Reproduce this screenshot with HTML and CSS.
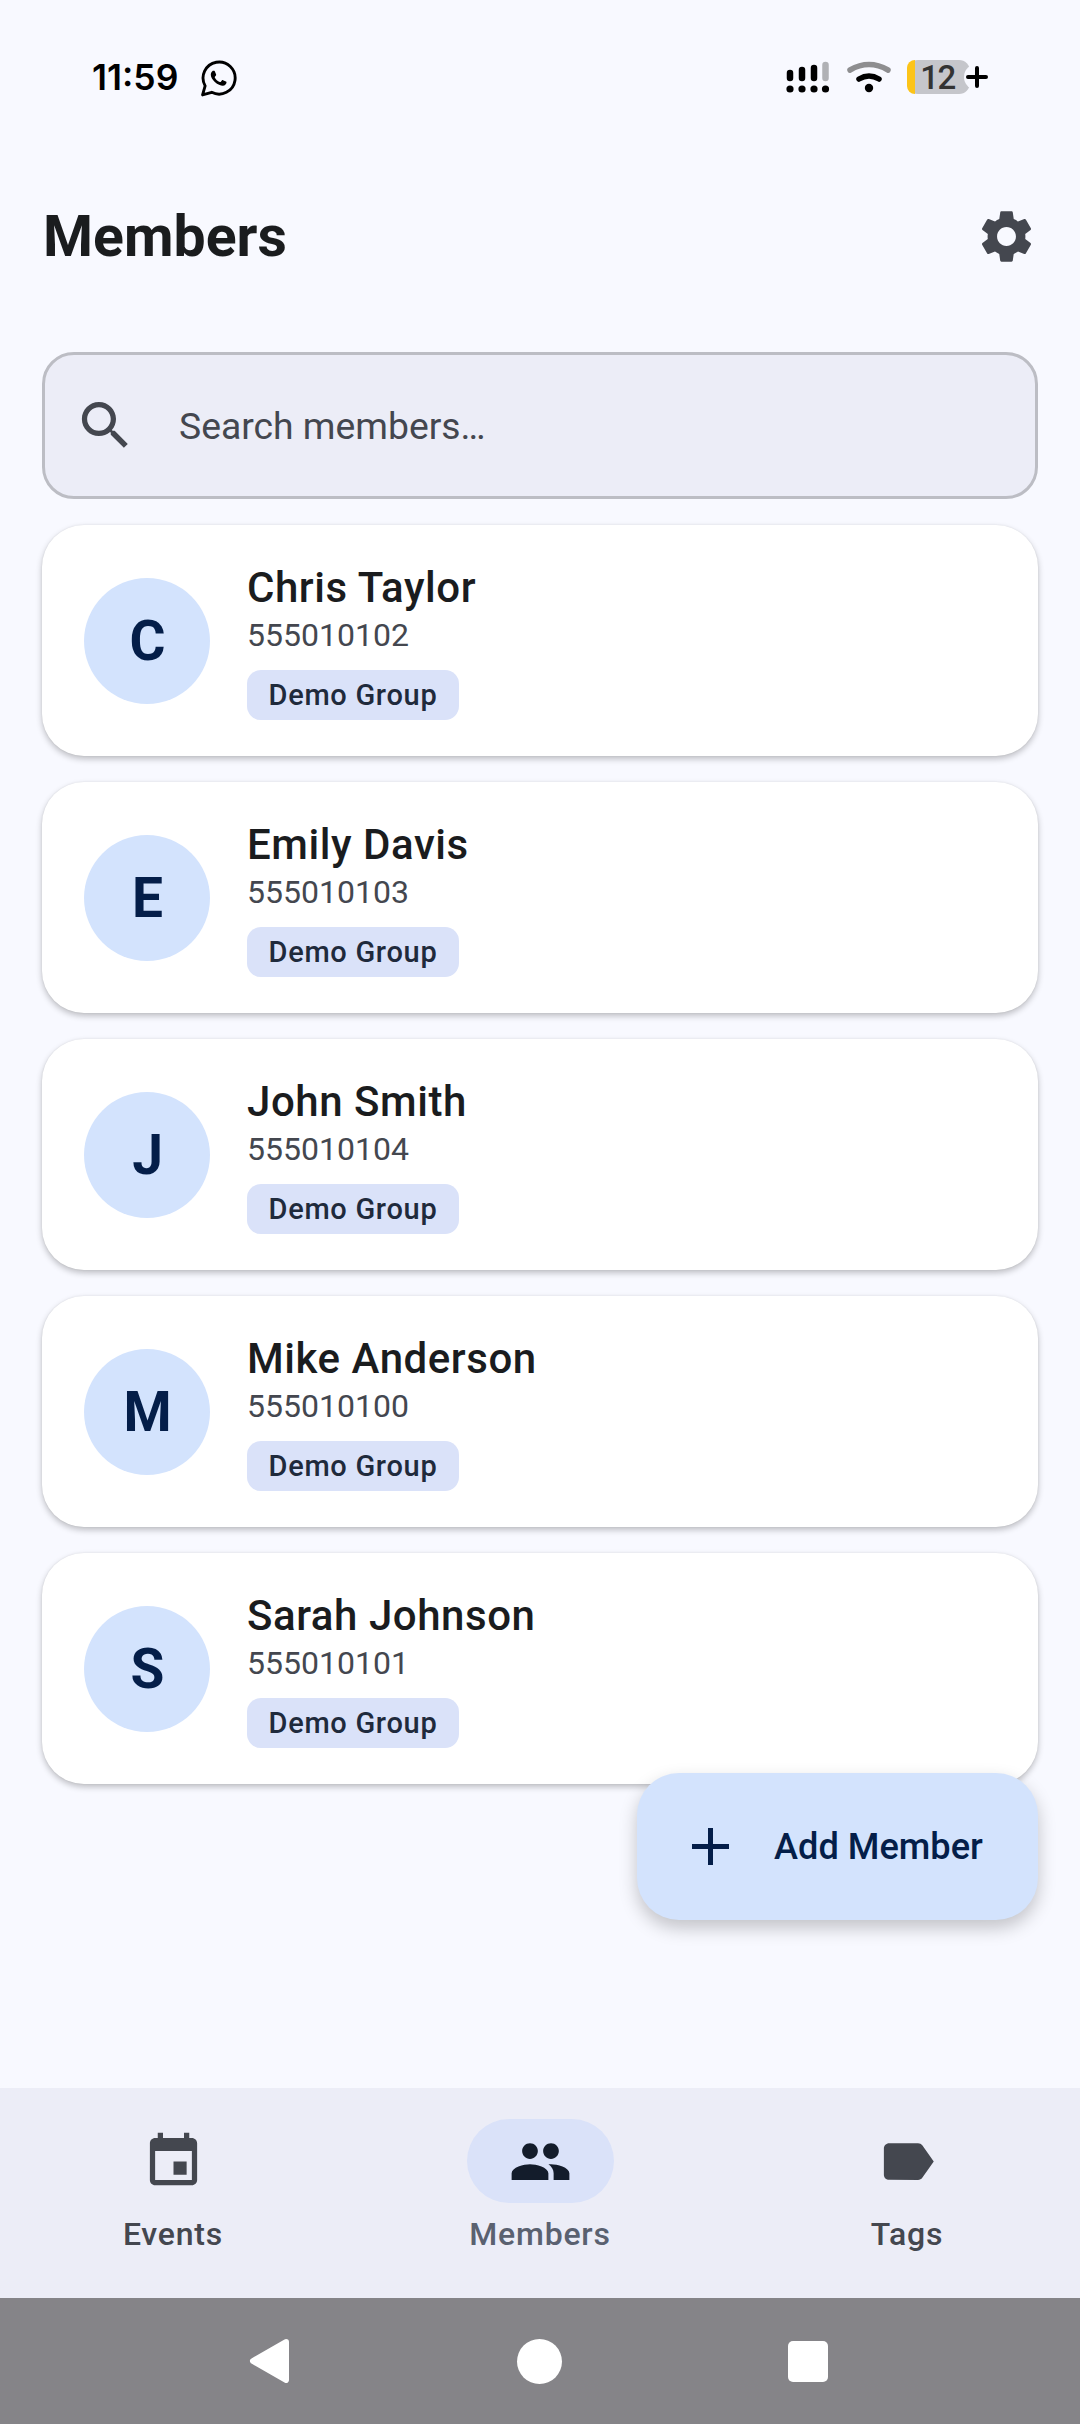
FILE: index.html
```html
<!DOCTYPE html>
<html>

<head>
    <meta charset="utf-8">
    <title>Members</title>
    <link rel="stylesheet" href="styles.css">
</head>

<body>
    <div class="statusbar">
        <div class="status-left">
            <span class="clock">11:59</span>
            <svg class="whatsapp" viewBox="0 0 36 36">
                <path d="M2.5 34 L5 25.2 A15.6 15.6 0 1 1 11.4 31.4 Z" fill="none" stroke="#000" stroke-width="2.8" stroke-linejoin="round" />
                <path d="M13.2 10.5c.5 0 1 0 1.3.8l1.2 2.8c.1.4 0 .7-.2 1l-1 1.3c-.2.3-.2.5 0 .8.9 1.6 2.5 3.2 4.8 4.2.3.1.6.1.8-.1l1.3-1.5c.3-.3.6-.3 1-.2l2.8 1.3c.4.2.6.4.6.7 0 1.6-1.4 3.3-3.6 3.4-1.5.1-5-1-7.8-3.6-2.6-2.4-3.8-5-3.9-7 0-1.8.9-3 1.5-3.5.3-.3.6-.4.9-.4z" />
            </svg>
        </div>
        <div class="status-right">
            <svg class="signal" viewBox="0 0 44 34">
                <g stroke="#000" stroke-width="6.5" stroke-linecap="round">
                    <path d="M4 13V18" />
                    <path d="M16 10V18" />
                    <path d="M28 8V18" />
                    <path d="M39.5 5V18" stroke="#b0b1b5" />
                </g>
                <circle cx="4" cy="29" r="3.6" />
                <circle cx="16" cy="29" r="3.6" />
                <circle cx="28" cy="29" r="3.6" />
                <circle cx="39.5" cy="29" r="3.6" />
            </svg>
            <svg class="wifi" viewBox="0 0 44 34">
                <path d="M3 10Q22 -1 41 10" fill="none" stroke="#8e8e90" stroke-width="5.5" stroke-linecap="round" />
                <path d="M12 19Q22 13 32 19" fill="none" stroke="#000" stroke-width="5.5" stroke-linecap="round" />
                <circle cx="22" cy="28" r="4.2" />
            </svg>
            <div class="battery">
                <span class="battery-level"></span>
                <span class="battery-num">12</span>
                <svg class="battery-plus" viewBox="0 0 26 26">
                    <circle cx="13" cy="13" r="13" fill="#f8f9ff" />
                    <path d="M13 4V22M4 13H22" stroke="#000" stroke-width="4" stroke-linecap="round" />
                </svg>
            </div>
        </div>
    </div>

    <header class="topbar">
        <h1>Members</h1>
        <svg class="icon gear" viewBox="0 0 24 24">
            <path d="M19.14 12.94c.04-.3.06-.61.06-.94 0-.32-.02-.64-.07-.94l2.03-1.58c.18-.14.23-.41.12-.61l-1.92-3.32c-.12-.22-.37-.29-.59-.22l-2.39.96c-.5-.38-1.03-.7-1.62-.94l-.36-2.54c-.04-.24-.24-.41-.48-.41h-3.84c-.24 0-.43.17-.47.41l-.36 2.54c-.59.24-1.13.57-1.62.94l-2.39-.96c-.22-.08-.47 0-.59.22L2.74 8.87c-.12.21-.08.47.12.61l2.03 1.58c-.05.3-.09.63-.09.94s.02.64.07.94l-2.03 1.58c-.18.14-.23.41-.12.61l1.92 3.32c.12.22.37.29.59.22l2.39-.96c.5.38 1.03.7 1.62.94l.36 2.54c.05.24.24.41.48.41h3.84c.24 0 .44-.17.47-.41l.36-2.54c.59-.24 1.13-.56 1.62-.94l2.39.96c.22.08.47 0 .59-.22l1.92-3.32c.12-.22.07-.47-.12-.61l-2.01-1.58zM12 15.6c-1.98 0-3.6-1.62-3.6-3.6s1.62-3.6 3.6-3.6 3.6 1.62 3.6 3.6-1.62 3.6-3.6 3.6z" />
        </svg>
    </header>

    <div class="search">
        <svg class="icon" viewBox="0 0 24 24">
            <path d="M15.5 14h-.79l-.28-.27C15.41 12.59 16 11.11 16 9.5 16 5.91 13.09 3 9.5 3S3 5.91 3 9.5 5.91 16 9.5 16c1.61 0 3.09-.59 4.23-1.57l.27.28v.79l5 4.99L20.49 19l-4.99-5zm-6 0C7.01 14 5 11.99 5 9.5S7.01 5 9.5 5 14 7.01 14 9.5 11.99 14 9.5 14z" />
        </svg>
        <span class="search-text">Search members…</span>
    </div>

    <main class="members">
        <div class="card">
            <div class="avatar">C</div>
            <div class="info">
                <div class="name">Chris Taylor</div>
                <div class="phone">555010102</div>
                <span class="chip">Demo Group</span>
            </div>
        </div>
        <div class="card">
            <div class="avatar">E</div>
            <div class="info">
                <div class="name">Emily Davis</div>
                <div class="phone">555010103</div>
                <span class="chip">Demo Group</span>
            </div>
        </div>
        <div class="card">
            <div class="avatar">J</div>
            <div class="info">
                <div class="name">John Smith</div>
                <div class="phone">555010104</div>
                <span class="chip">Demo Group</span>
            </div>
        </div>
        <div class="card">
            <div class="avatar">M</div>
            <div class="info">
                <div class="name">Mike Anderson</div>
                <div class="phone">555010100</div>
                <span class="chip">Demo Group</span>
            </div>
        </div>
        <div class="card">
            <div class="avatar">S</div>
            <div class="info">
                <div class="name">Sarah Johnson</div>
                <div class="phone">555010101</div>
                <span class="chip">Demo Group</span>
            </div>
        </div>

        <div class="fab">
            <svg class="fab-plus" viewBox="0 0 37 37">
                <path d="M18.5 0V37M0 18.5H37" stroke="#041e49" stroke-width="5" />
            </svg>
            <span>Add Member</span>
        </div>
    </main>

    <nav class="tabs">
        <div class="tab">
            <div class="tab-icon">
                <svg class="icon" viewBox="0 0 24 24">
                    <path d="M17 12h-5v5h5v-5zM16 1v2H8V1H6v2H5c-1.11 0-1.99.9-1.99 2L3 19c0 1.1.89 2 2 2h14c1.1 0 2-.9 2-2V5c0-1.1-.9-2-2-2h-1V1h-2zm3 18H5V8h14v11z" />
                </svg>
            </div>
            <span class="tab-label">Events</span>
        </div>
        <div class="tab active">
            <div class="tab-icon">
                <svg class="icon" viewBox="0 0 24 24">
                    <path d="M16 11c1.66 0 2.99-1.34 2.99-3S17.66 5 16 5c-1.66 0-3 1.34-3 3s1.34 3 3 3zm-8 0c1.66 0 2.99-1.34 2.99-3S9.66 5 8 5C6.34 5 5 6.34 5 8s1.34 3 3 3zm0 2c-2.33 0-7 1.17-7 3.5V19h14v-2.5c0-2.33-4.67-3.5-7-3.5zm8 0c-.29 0-.62.02-.97.05 1.16.84 1.97 1.97 1.97 3.45V19h6v-2.5c0-2.33-4.67-3.5-7-3.5z" />
                </svg>
            </div>
            <span class="tab-label">Members</span>
        </div>
        <div class="tab">
            <div class="tab-icon">
                <svg class="icon" viewBox="0 0 24 24">
                    <path d="M17.63 5.84C17.27 5.33 16.67 5 16 5L5 5.01C3.9 5.01 3 5.9 3 7v10c0 1.1.9 1.99 2 1.99L16 19c.67 0 1.27-.33 1.63-.84L22 12l-4.37-6.16z" />
                </svg>
            </div>
            <span class="tab-label">Tags</span>
        </div>
    </nav>

    <div class="sysnav">
        <svg class="sys-back" viewBox="0 0 41 44">
            <path d="M37 3 L4 22 L37 41 Z" fill="#fff" stroke="#fff" stroke-width="6" stroke-linejoin="round" />
        </svg>
        <span class="sys-home"></span>
        <span class="sys-recent"></span>
    </div>
</body>

</html>
```

FILE: styles.css
```css
* {
    box-sizing: border-box;
}

body {
    margin: 0;
    width: 1080px;
    height: 2424px;
    display: flex;
    flex-direction: column;
    background-color: #f8f9ff;
    font-family: Roboto, sans-serif;
    color: #1a1c1e;
    overflow: hidden;
}

.icon {
    display: block;
    width: 63px;
    height: 63px;
    fill: #44474f;
}

/* status bar */
.statusbar {
    height: 154px;
    padding: 60px 92px 0 92px;
    display: flex;
    justify-content: space-between;
    align-items: flex-start;
}

.status-left {
    display: flex;
    align-items: center;
    height: 36px;
}

.clock {
    margin-top: -2px;
    font-family: Inter, sans-serif;
    font-size: 35.5px;
    font-weight: 600;
    color: #000;
}

.whatsapp {
    width: 37px;
    height: 37px;
    margin-left: 22px;
}

.status-right {
    display: flex;
    align-items: center;
    height: 34px;
}

.signal {
    width: 44px;
    height: 34px;
    margin-left: -5px;
}

.wifi {
    width: 44px;
    height: 34px;
    margin-left: 17px;
}

.battery {
    position: relative;
    width: 63px;
    height: 34px;
    margin-left: 16px;
    margin-right: 18px;
    border-radius: 11px;
    background-color: #c5c6cb;
    display: flex;
    align-items: center;
    justify-content: center;
}

.battery-level {
    position: absolute;
    left: 0;
    top: 0;
    width: 8px;
    height: 34px;
    background-color: #fcc419;
    border-radius: 11px 0 0 11px;
}

.battery-num {
    font-size: 33px;
    font-weight: 500;
    letter-spacing: -1.5px;
    color: #333;
    padding-right: 2px;
}

.battery-plus {
    position: absolute;
    left: 57px;
    top: 4px;
    width: 26px;
    height: 26px;
}

/* title row */
.topbar {
    height: 164px;
    padding: 0 43px;
    display: flex;
    justify-content: space-between;
    align-items: center;
}

h1 {
    margin: 0;
    font-size: 57.2px;
    font-weight: 700;
}

.gear {
    margin-right: -1px;
}

.search {
    height: 147px;
    margin: 34px 42px 26px 42px;
    padding-left: 29px;
    display: flex;
    align-items: center;
    background-color: #ecedf7;
    border: 3px solid #bcbdc4;
    border-radius: 32px;
}

.search-text {
    margin-left: 42px;
    font-size: 37.3px;
    color: #44474f;
}

/* member list */
.members {
    flex: 1;
    position: relative;
    padding: 0 42px;
    display: flex;
    flex-direction: column;
    gap: 25px;
}

.card {
    height: 231px;
    margin-bottom: 1px;
    padding-left: 42px;
    display: flex;
    align-items: center;
    gap: 37px;
    background-color: #fff;
    border-radius: 42px;
    box-shadow: 0 3px 6px rgba(0, 0, 0, 0.24), 0 0 2px rgba(0, 0, 0, 0.08);
}

.avatar {
    width: 126px;
    height: 126px;
    padding-left: 1px;
    display: flex;
    align-items: center;
    justify-content: center;
    border-radius: 50%;
    background-color: #d3e3fd;
    color: #041e49;
    font-size: 55px;
    font-weight: 700;
}

.info {
    padding-top: 3px;
    display: flex;
    flex-direction: column;
    align-items: flex-start;
}

.name {
    margin-top: -4px;
    font-size: 42px;
    line-height: 54px;
    font-weight: 500;
    letter-spacing: 0.55px;
}

.phone {
    font-size: 32px;
    line-height: 40px;
    color: #44474f;
}

.chip {
    margin-top: 15px;
    width: 212px;
    height: 50px;
    display: flex;
    align-items: center;
    justify-content: center;
    background-color: #dae2f9;
    border-radius: 14px;
    color: #1f2a3c;
    font-size: 29px;
    font-weight: 500;
    letter-spacing: 0.7px;
}

.fab {
    position: absolute;
    right: 42px;
    top: 1248px;
    width: 401px;
    height: 147px;
    padding-left: 55px;
    display: flex;
    align-items: center;
    gap: 45px;
    background-color: #d3e3fd;
    border-radius: 42px;
    box-shadow: 0 8px 18px rgba(0, 0, 0, 0.22);
    color: #041e49;
    font-size: 36.2px;
    font-weight: 500;
}

.fab-plus {
    width: 37px;
    height: 37px;
}

/* bottom navigation */
.tabs {
    height: 210px;
    padding-top: 31px;
    display: grid;
    grid-template-columns: repeat(3, 1fr);
    gap: 21px;
    background-color: #ecedf7;
}

.tab {
    display: flex;
    flex-direction: column;
    align-items: center;
}

.tab-icon {
    width: 147px;
    height: 84px;
    display: flex;
    align-items: center;
    justify-content: center;
    border-radius: 42px;
}

.tab-label {
    margin-top: 12px;
    font-size: 32px;
    font-weight: 500;
    letter-spacing: 0.8px;
    color: #44474f;
}

.active .tab-icon {
    background-color: #dae2f9;
}

.active .icon {
    fill: #131c2b;
}

.active .tab-label {
    color: #5a6170;
}

/* system buttons */
.sysnav {
    height: 126px;
    display: grid;
    grid-template-columns: 270px 270px 267px;
    justify-content: start;
    padding-left: 134px;
    align-items: center;
    justify-items: center;
    background-color: #858488;
}

.sys-back {
    width: 41px;
    height: 44px;
}

.sys-home {
    width: 45px;
    height: 45px;
    border-radius: 50%;
    background-color: #fff;
}

.sys-recent {
    width: 40px;
    height: 41px;
    border-radius: 5px;
    background-color: #fff;
}
```
